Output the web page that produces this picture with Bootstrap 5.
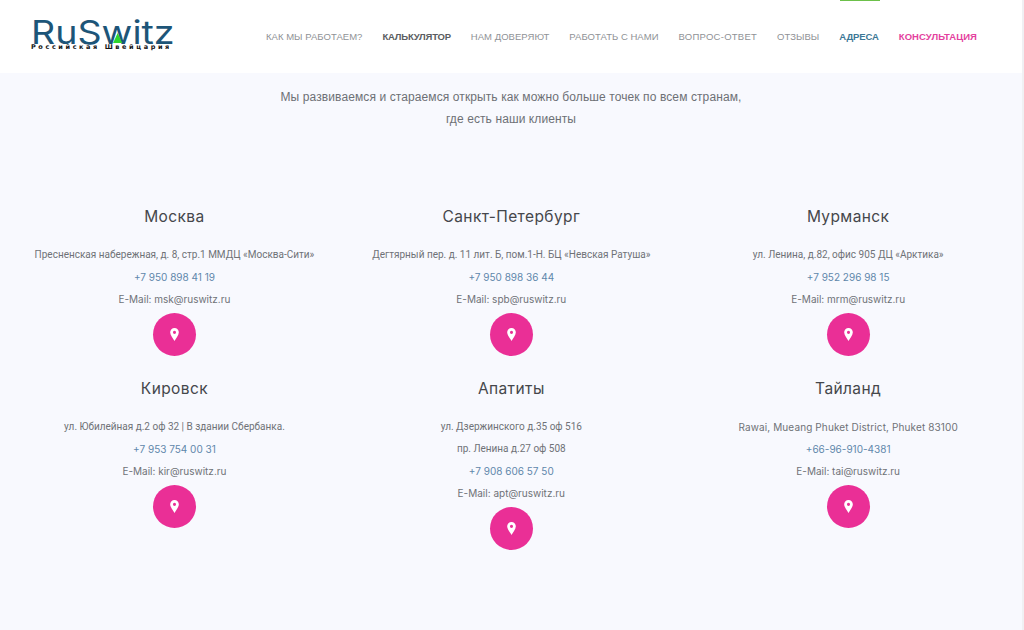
<!DOCTYPE html>
<html lang="ru">
<head>
<meta charset="utf-8">
<title>RuSwitz</title>
<link href="https://cdn.jsdelivr.net/npm/bootstrap@5.3.0/dist/css/bootstrap.min.css" rel="stylesheet">
<style>
html,body{height:630px;overflow:hidden}
body{background:#f8f9fe;font-family:Roboto,"Liberation Sans",sans-serif;color:#6b6f76;border-right:2px solid #f0f0f3}
.site-head{height:73px;background:#fff;position:relative}
.top-mark{position:absolute;left:840px;top:0;width:40px;height:1px;background:#6cc04a}
.logo-box{width:266px;padding-left:31px;padding-top:19.5px}
.logo-word{font-family:Inter,sans-serif;font-size:33px;line-height:24px;color:#1d5578;font-weight:400;position:relative;display:block;width:122px;transform:scaleX(1.14);transform-origin:left center;white-space:nowrap}
.logo-word i{position:absolute;left:72px;top:13.5px;width:0;height:0;border-left:4.5px solid transparent;border-right:4.5px solid transparent;border-bottom:10px solid #2fd62f}
.logo-tag{font-family:"DejaVu Sans",sans-serif;font-size:6.5px;line-height:7px;font-weight:700;color:#111;letter-spacing:2.6px;white-space:nowrap}
.menu-row{gap:20px;font-family:"Liberation Sans",sans-serif;font-size:9.5px;letter-spacing:.03px;padding-top:31px}
.menu-row a{color:#8f9296;text-decoration:none;white-space:nowrap;line-height:12px}
.menu-row a.m-act{color:#5a5d61;font-weight:700;letter-spacing:-.2px}
.menu-row a.m-wide{letter-spacing:.26px}
.menu-row a.m-blue{color:#3c7896;font-weight:700;letter-spacing:-.1px}
.menu-row a.m-pink{color:#e43f9e;font-weight:700;letter-spacing:.05px}
.intro{font-size:12px;line-height:22px;text-align:center;color:#6d7075;padding-top:13px;height:97px;margin:0;font-family:"Liberation Sans",sans-serif;letter-spacing:.1px}
.wrap-grid{width:1010.6px;margin-left:6px}
.office{height:171.5px;text-align:center;padding-top:36px}
.office h3{font-family:Inter,sans-serif;font-size:15.5px;line-height:22px;font-weight:400;color:#45474b;margin:0 0 16px;letter-spacing:.4px}
.office p{font-size:10px;line-height:22px;margin:0;color:#6f7277;white-space:nowrap}
.office p.lat{font-family:Inter,sans-serif}
.office p.wide{letter-spacing:.12px}
.office p.tel{font-family:Inter,sans-serif}
.office p.tel a{color:#5f87ab;text-decoration:none}
.pin-btn{width:43px;height:43px;border-radius:50%;background:#ea2f96;margin:3px auto 0}
.pin-btn svg{width:9px;height:13px;display:block}
</style>
</head>
<body>
<header class="site-head d-flex">
  <span class="top-mark"></span>
  <div class="logo-box">
    <div class="logo-word">RuSwitz<i></i></div>
    <div class="logo-tag">Российская Швейцария</div>
  </div>
  <nav class="menu-row d-flex">
    <a href="#">КАК МЫ РАБОТАЕМ?</a>
    <a href="#" class="m-act">КАЛЬКУЛЯТОР</a>
    <a href="#">НАМ ДОВЕРЯЮТ</a>
    <a href="#">РАБОТАТЬ С НАМИ</a>
    <a href="#" class="m-wide">ВОПРОС-ОТВЕТ</a>
    <a href="#">ОТЗЫВЫ</a>
    <a href="#" class="m-blue">АДРЕСА</a>
    <a href="#" class="m-pink">КОНСУЛЬТАЦИЯ</a>
  </nav>
</header>
<p class="intro">Мы развиваемся и стараемся открыть как можно больше точек по всем странам,<br>где есть наши клиенты</p>
<div class="wrap-grid">
  <div class="row g-0">
    <div class="col-4 office">
      <h3>Москва</h3>
      <p>Пресненская набережная, д. 8, стр.1 ММДЦ «Москва-Сити»</p>
      <p class="tel"><a href="#">+7 950 898 41 19</a></p>
      <p class="lat">E-Mail: msk@ruswitz.ru</p>
      <div class="pin-btn d-flex align-items-center justify-content-center"><svg viewBox="0 0 10 15"><path fill="#fff" fill-rule="evenodd" d="M5 0a5 5 0 0 0-5 5c0 3.4 3.4 7 5 10 1.600-3 5-6.600 5-10a5 5 0 0 0-5-5zm0 3.200a1.800 1.800 0 1 1 0 3.600 1.800 1.800 0 0 1 0-3.600z"/></svg></div>
    </div>
    <div class="col-4 office">
      <h3>Санкт-Петербург</h3>
      <p>Дегтярный пер. д. 11 лит. Б, пом.1-Н. БЦ «Невская Ратуша»</p>
      <p class="tel"><a href="#">+7 950 898 36 44</a></p>
      <p class="lat">E-Mail: spb@ruswitz.ru</p>
      <div class="pin-btn d-flex align-items-center justify-content-center"><svg viewBox="0 0 10 15"><path fill="#fff" fill-rule="evenodd" d="M5 0a5 5 0 0 0-5 5c0 3.4 3.4 7 5 10 1.600-3 5-6.600 5-10a5 5 0 0 0-5-5zm0 3.200a1.800 1.800 0 1 1 0 3.600 1.800 1.800 0 0 1 0-3.600z"/></svg></div>
    </div>
    <div class="col-4 office">
      <h3>Мурманск</h3>
      <p>ул. Ленина, д.82, офис 905 ДЦ «Арктика»</p>
      <p class="tel"><a href="#">+7 952 296 98 15</a></p>
      <p class="lat">E-Mail: mrm@ruswitz.ru</p>
      <div class="pin-btn d-flex align-items-center justify-content-center"><svg viewBox="0 0 10 15"><path fill="#fff" fill-rule="evenodd" d="M5 0a5 5 0 0 0-5 5c0 3.4 3.4 7 5 10 1.600-3 5-6.600 5-10a5 5 0 0 0-5-5zm0 3.200a1.800 1.800 0 1 1 0 3.600 1.800 1.800 0 0 1 0-3.600z"/></svg></div>
    </div>
    <div class="col-4 office">
      <h3>Кировск</h3>
      <p>ул. Юбилейная д.2 оф 32 | В здании Сбербанка.</p>
      <p class="tel"><a href="#">+7 953 754 00 31</a></p>
      <p class="lat">E-Mail: kir@ruswitz.ru</p>
      <div class="pin-btn d-flex align-items-center justify-content-center"><svg viewBox="0 0 10 15"><path fill="#fff" fill-rule="evenodd" d="M5 0a5 5 0 0 0-5 5c0 3.4 3.4 7 5 10 1.600-3 5-6.600 5-10a5 5 0 0 0-5-5zm0 3.200a1.800 1.800 0 1 1 0 3.600 1.800 1.800 0 0 1 0-3.600z"/></svg></div>
    </div>
    <div class="col-4 office">
      <h3>Апатиты</h3>
      <p>ул. Дзержинского д.35 оф 516</p>
      <p>пр. Ленина д.27 оф 508</p>
      <p class="tel"><a href="#">+7 908 606 57 50</a></p>
      <p class="lat">E-Mail: apt@ruswitz.ru</p>
      <div class="pin-btn d-flex align-items-center justify-content-center"><svg viewBox="0 0 10 15"><path fill="#fff" fill-rule="evenodd" d="M5 0a5 5 0 0 0-5 5c0 3.4 3.4 7 5 10 1.600-3 5-6.600 5-10a5 5 0 0 0-5-5zm0 3.200a1.800 1.800 0 1 1 0 3.600 1.800 1.800 0 0 1 0-3.600z"/></svg></div>
    </div>
    <div class="col-4 office">
      <h3>Тайланд</h3>
      <p class="lat wide">Rawai, Mueang Phuket District, Phuket 83100</p>
      <p class="tel"><a href="#">+66-96-910-4381</a></p>
      <p class="lat">E-Mail: tai@ruswitz.ru</p>
      <div class="pin-btn d-flex align-items-center justify-content-center"><svg viewBox="0 0 10 15"><path fill="#fff" fill-rule="evenodd" d="M5 0a5 5 0 0 0-5 5c0 3.4 3.4 7 5 10 1.600-3 5-6.600 5-10a5 5 0 0 0-5-5zm0 3.200a1.800 1.800 0 1 1 0 3.600 1.800 1.800 0 0 1 0-3.600z"/></svg></div>
    </div>
  </div>
</div>
</body>
</html>
